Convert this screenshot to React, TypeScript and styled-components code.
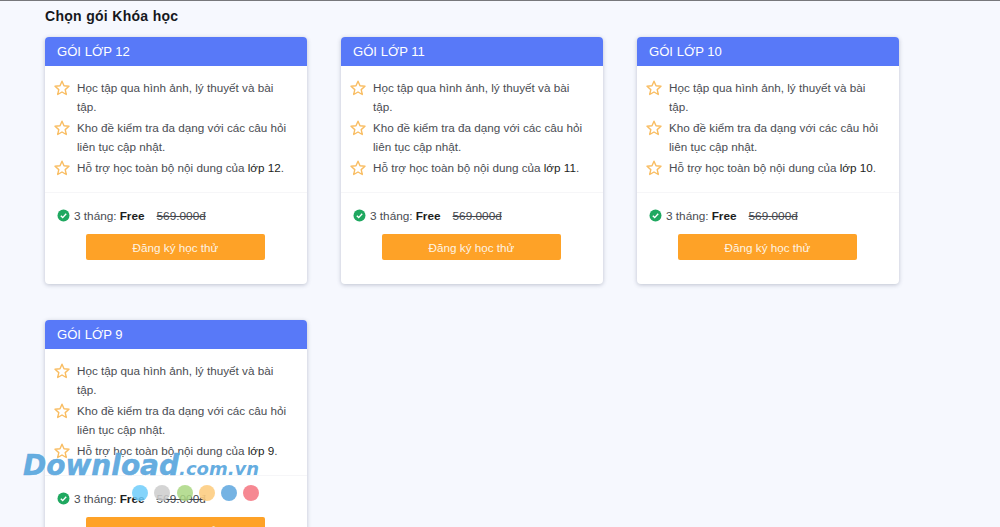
import styled, { createGlobalStyle } from "styled-components";

const GlobalStyle = createGlobalStyle`
  html, body {
    margin: 0;
    height: 527px;
    overflow: hidden;
    background: #f6f8fe;
    font-family: "Liberation Sans", Arial, sans-serif;
  }
`;

const Page = styled.div`
  position: relative;
  height: 527px;
  overflow: hidden;
  border-top: 1px solid #77787c;
  box-sizing: border-box;
  padding: 7px 0 0 45px;
`;

const Title = styled.h1`
  margin: 0 0 12px;
  font-size: 14px;
  line-height: 17px;
  font-weight: 700;
  letter-spacing: 0.3px;
  color: #16181d;
`;

const Grid = styled.div`
  display: grid;
  grid-template-columns: repeat(3, 262px);
  column-gap: 34px;
  row-gap: 36px;
`;

const Card = styled.section`
  width: 262px;
  height: 247px;
  background: #fff;
  border-radius: 4px;
  box-shadow: 0 1px 4px rgba(60, 70, 100, 0.3);
  overflow: hidden;
`;

const CardHeader = styled.h2`
  margin: 0;
  height: 29px;
  padding: 0 12px;
  background: #5879f8;
  color: #fff;
  font-size: 13.1px;
  font-weight: 400;
  line-height: 29px;
`;

const Features = styled.ul`
  list-style: none;
  margin: 0;
  padding: 12px 15px 15px 9px;
  border-bottom: 1px solid #f6f6f8;
  display: flex;
  flex-direction: column;
  gap: 2px;
`;

const Feature = styled.li`
  display: flex;
  gap: 7px;
  font-size: 11.7px;
  line-height: 19px;
  color: #4a4d53;
`;

const StarIcon = styled.svg`
  flex: none;
  width: 16px;
  height: 16px;
  margin-top: 2px;
  fill: none;
  stroke: #f9bd62;
  stroke-width: 1.4;
  stroke-linejoin: round;
`;

const Strong = styled.span`
  color: #1c1e22;
`;

const PriceRow = styled.div`
  display: flex;
  align-items: center;
  padding: 13px 12px 0;
  height: 19px;
  font-size: 11.8px;
  color: #4a4d53;
`;

const CheckIcon = styled.svg`
  flex: none;
  width: 13px;
  height: 13px;
  margin-right: 4px;
`;

const Free = styled.b`
  color: #1c1e22;
  margin: 0 12px 0 3px;
`;

const OldPrice = styled.s`
  color: #44474d;
`;

const Action = styled.div`
  display: flex;
  justify-content: center;
  padding-right: 1px;
  margin-top: 9px;
`;

const TrialButton = styled.button`
  width: 179px;
  height: 26px;
  border: 0;
  border-radius: 2px;
  background: #fea227;
  color: #fdf3e4;
  font-family: inherit;
  font-size: 11.7px;
  padding: 0;
`;

const Watermark = styled.div`
  position: absolute;
  left: 23px;
  top: 448px;
  font-family: "DejaVu Sans", "Liberation Sans", sans-serif;
  font-style: italic;
  font-weight: 700;
  color: rgba(92, 168, 222, 0.95);
  -webkit-text-stroke: 0.5px rgba(92, 168, 222, 0.95);
  font-size: 28px;
  line-height: 34px;
  white-space: nowrap;
`;

const WatermarkTail = styled.span`
  font-size: 18px;
  -webkit-text-stroke: 0;
`;

const Dots = styled.div`
  position: absolute;
  left: 132px;
  top: 484px;
  display: flex;
  gap: 6.3px;
`;

const Dot = styled.span<{ $color: string }>`
  width: 16px;
  height: 16px;
  border-radius: 50%;
  background: ${(p) => p.$color};
`;

const Star = () => (
  <StarIcon viewBox="0 0 16 16">
    <path d="M8 1.2l2 4.6 5 .5-3.8 3.3 1.1 4.9L8 12l-4.3 2.5 1.1-4.9L1 6.3l5-.5z" />
  </StarIcon>
);

const Check = () => (
  <CheckIcon viewBox="0 0 13 13">
    <circle cx="6.5" cy="6.5" r="6" fill="#1fa860" />
    <path d="M3.8 6.7l1.9 1.9 3.5-3.8" fill="none" stroke="#fff" strokeWidth="1.4" />
  </CheckIcon>
);

const grades = [12, 11, 10, 9];

export default function App() {
  return (
    <>
      <GlobalStyle />
      <Page>
        <Title>Chọn gói Khóa học</Title>
        <Grid>
          {grades.map((grade) => (
            <Card key={grade}>
              <CardHeader>GÓI LỚP {grade}</CardHeader>
              <Features>
                <Feature>
                  <Star />
                  <span>Học tập qua hình ảnh, lý thuyết và bài tập.</span>
                </Feature>
                <Feature>
                  <Star />
                  <span>Kho đề kiểm tra đa dạng với các câu hỏi liên tục cập nhật.</span>
                </Feature>
                <Feature>
                  <Star />
                  <span>
                    Hỗ trợ học toàn bộ nội dung của <Strong>lớp {grade}</Strong>.
                  </span>
                </Feature>
              </Features>
              <PriceRow>
                <Check />
                3 tháng: <Free>Free</Free>
                <OldPrice>569.000đ</OldPrice>
              </PriceRow>
              <Action>
                <TrialButton>Đăng ký học thử</TrialButton>
              </Action>
            </Card>
          ))}
        </Grid>
        <Watermark>
          Download<WatermarkTail>.com.vn</WatermarkTail>
        </Watermark>
        <Dots>
          <Dot $color="rgba(110, 205, 250, 0.85)" />
          <Dot $color="rgba(205, 205, 205, 0.85)" />
          <Dot $color="rgba(170, 215, 130, 0.85)" />
          <Dot $color="rgba(253, 205, 130, 0.9)" />
          <Dot $color="rgba(110, 175, 225, 0.95)" />
          <Dot $color="rgba(245, 130, 140, 0.95)" />
        </Dots>
      </Page>
    </>
  );
}
